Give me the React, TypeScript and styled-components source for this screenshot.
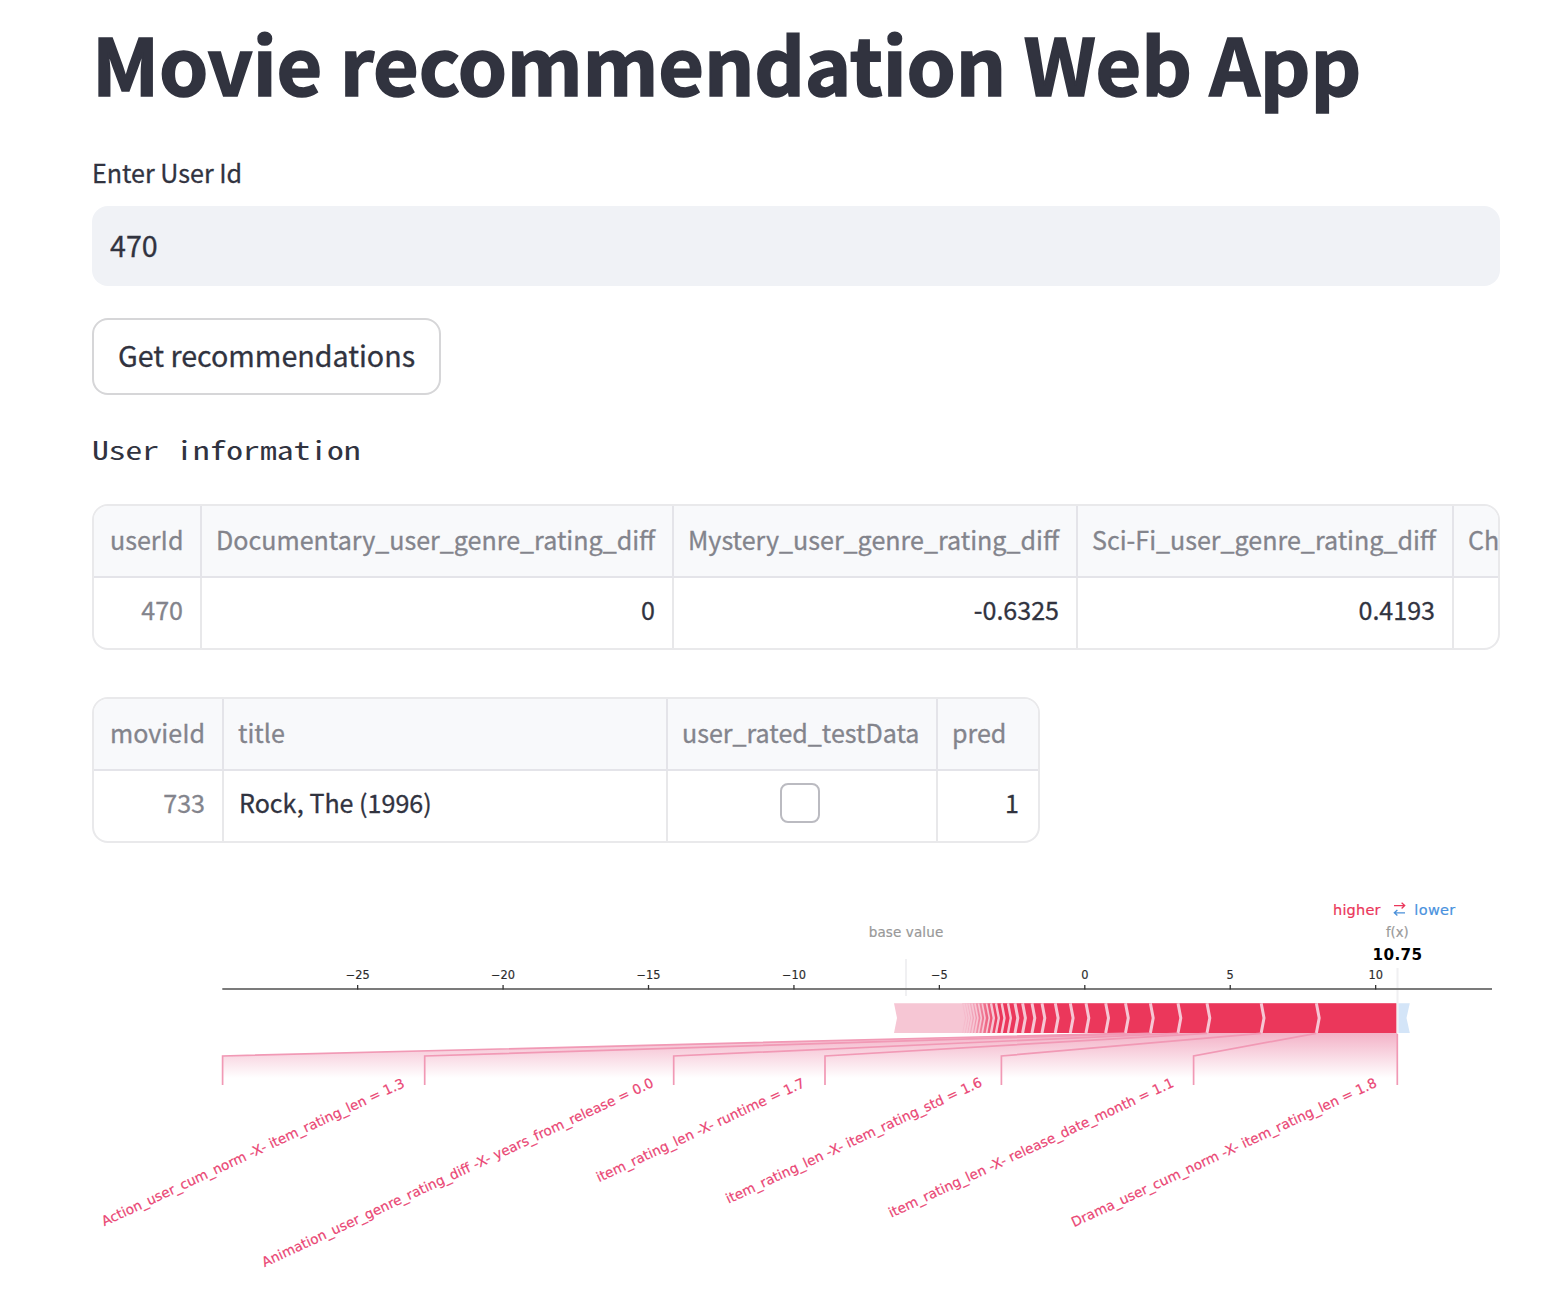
import React from "react";
import styled, { createGlobalStyle } from "styled-components";

const GlobalStyle = createGlobalStyle`
  * { box-sizing: border-box; }
  body { margin: 0; background: #ffffff; }
`;

const sans = `"Noto Sans CJK JP", "Noto Sans", sans-serif`;

const Page = styled.main`
  display: flex;
  flex-direction: column;
  align-items: flex-start;
  width: 1566px;
  height: 1290px;
  padding: 0 66px 0 92px;
  overflow: hidden;
  color: #31333f;
  font-family: ${sans};
  -webkit-text-stroke: 0.3px;
`;

const Title = styled.h1`
  margin: 9px 0 0;
  height: 106px;
  line-height: 106px;
  font-size: 78.8px;
  font-weight: 700;
  letter-spacing: -0.18px;
  white-space: nowrap;
  -webkit-text-stroke: 1.6px #31333f;
`;

const Label = styled.label`
  margin-top: 37px;
  height: 40px;
  line-height: 40px;
  font-size: 25.07px;
`;

const Input = styled.input`
  margin: 14px 0 0;
  width: 100%;
  height: 80px;
  padding: 0 18px 3px;
  border: 0;
  border-radius: 16px;
  outline: 0;
  background: #f0f2f6;
  color: #31333f;
  font-family: ${sans};
  font-size: 28.65px;
  -webkit-text-stroke: 0.3px;
`;

const Button = styled.button`
  margin: 32px 0 0;
  width: 349px;
  height: 77px;
  padding: 0 0 5px;
  border: 2px solid #d6d6d8;
  border-radius: 16px;
  background: #ffffff;
  color: #31333f;
  font-family: ${sans};
  font-size: 28.65px;
  white-space: nowrap;
  -webkit-text-stroke: 0.3px;
`;

const Caption = styled.p`
  margin: 34px 0 0;
  height: 40px;
  line-height: 40px;
  font-family: "Noto Sans Mono CJK JP", "DejaVu Sans Mono", monospace;
  font-size: 25.2px;
  white-space: pre;
  transform: scaleX(1.3333);
  transform-origin: left center;
  -webkit-text-stroke: 0;
`;

const Frame = styled.section<{ $columns: string; $width: string; $top: number }>`
  display: grid;
  flex: none;
  grid-template-columns: ${(p) => p.$columns};
  grid-template-rows: 72px 70px;
  width: ${(p) => p.$width};
  height: 146px;
  margin-top: ${(p) => p.$top}px;
  border: 2px solid #e9e9eb;
  border-radius: 16px;
  overflow: hidden;
`;

const Cell = styled.div<{
  $align?: string;
  $muted?: boolean;
  $left?: number;
  $right?: number;
  $bottom?: number;
}>`
  display: flex;
  align-items: center;
  justify-content: ${(p) => p.$align ?? "flex-end"};
  min-width: 0;
  overflow: hidden;
  padding: 0 ${(p) => p.$right ?? 17}px ${(p) => p.$bottom ?? 8}px ${(p) => p.$left ?? 14}px;
  border-right: 2px solid #e8e8ea;
  color: ${(p) => (p.$muted ? "#83848c" : "#31333f")};
  font-size: 25.07px;
  white-space: nowrap;
  &:last-child { border-right: 0; }
`;

const HeadCell = styled(Cell)<{ $last?: boolean }>`
  justify-content: flex-start;
  padding: 0 0 5px ${(p) => p.$left ?? 14}px;
  border-bottom: 2px solid #e4e4e9;
  border-right: ${(p) => (p.$last ? "0" : "2px solid #e4e4e9")};
  background: #f8f9fb;
  color: #83848c;
`;

const Checkbox = styled.span`
  width: 40px;
  height: 40px;
  border: 2px solid #bbbbc1;
  border-radius: 8px;
  background: #ffffff;
`;

const Plot = styled.svg`
  display: block;
  flex: none;
  margin-top: 17px;
  width: 1408px;
  height: 430px;
  font-family: "DejaVu Sans", sans-serif;
  -webkit-text-stroke: 0;
`;

const FeatureLabel = styled.text`
  font-size: 13.5px;
  fill: #ea4674;
  stroke: #ea4674;
  stroke-width: 0.2px;
`;

const RED = "#eb375b";
const PALE = "#f6c6d4";

const ticks = [-25, -20, -15, -10, -5, 0, 5, 10];

const boundaries = [
  964, 966.5, 969, 972, 975, 978.5, 982.2, 986.5, 991, 996, 1001.7, 1008, 1015,
  1022.6, 1032, 1042, 1055.3, 1070.3, 1086, 1105.7, 1125.5, 1150.4, 1178, 1207, 1261.2, 1316.4,
];

const labels = [
  { x: 222.6, from: 1125, start: [104.3, 1226.3], length: 332, text: "Action_user_cum_norm -X- item_rating_len = 1.3" },
  { x: 424.7, from: 1150, start: [264.5, 1267.3], length: 430, text: "Animation_user_genre_rating_diff -X- years_from_release = 0.0" },
  { x: 673.7, from: 1178, start: [599, 1182.3], length: 228, text: "item_rating_len -X- runtime = 1.7" },
  { x: 825, from: 1207, start: [728.6, 1203.8], length: 280.5, text: "item_rating_len -X- item_rating_std = 1.6" },
  { x: 1001.4, from: 1261, start: [891.3, 1217.8], length: 312.5, text: "item_rating_len -X- release_date_month = 1.1" },
  { x: 1193.6, from: 1316, start: [1074, 1227.3], length: 335, text: "Drama_user_cum_norm -X- item_rating_len = 1.8" },
];

function ForcePlot() {
  return (
    <Plot viewBox="92 860 1408 430">
      <defs>
        <linearGradient id="fade" gradientUnits="userSpaceOnUse" x1="0" y1="1033" x2="0" y2="1078">
          <stop offset="0" stopColor="#f3b2c7" />
          <stop offset="0.5" stopColor="#f9d8e3" />
          <stop offset="1" stopColor="#ffffff" />
        </linearGradient>
        <linearGradient id="strength" gradientUnits="userSpaceOnUse" x1="960" y1="0" x2="998" y2="0">
          <stop offset="0" stopColor={PALE} />
          <stop offset="0.3" stopColor="#f3a9be" />
          <stop offset="1" stopColor={RED} />
        </linearGradient>
      </defs>

      <text x="1333" y="915" fontSize="14.5" fill={RED} stroke={RED} strokeWidth="0.2" textLength="47.5">higher</text>
      <g fill="none" strokeWidth="1.3">
        <path d="M1394 905.6H1404.5M1401.6 902.8L1404.7 905.6L1401.6 908.4" stroke={RED} />
        <path d="M1405 912.8H1394.5M1397.4 910L1394.3 912.8L1397.4 915.6" stroke="#4a90d9" />
      </g>
      <text x="1414.3" y="915" fontSize="14.5" fill="#4a92de" stroke="#4a92de" strokeWidth="0.2" textLength="41">lower</text>
      <text x="1397.3" y="936.6" fontSize="13.2" fill="#999999" stroke="#999999" strokeWidth="0.2" textAnchor="middle">f(x)</text>
      <text x="906" y="936.8" fontSize="13.5" fill="#999999" stroke="#999999" strokeWidth="0.2" textAnchor="middle" textLength="74.5">base value</text>
      <text x="1397.3" y="960" fontSize="15.2" fontWeight="700" fill="#000000" textAnchor="middle" textLength="49.5">10.75</text>

      <path d="M906 959V996M1397.5 968V1033" stroke="#f0f0f2" strokeWidth="2" />
      <path d="M222.3 989H1492" stroke="#7b7b7b" strokeWidth="2" />
      {ticks.map((t) => {
        const x = 1084.8 + t * 29.086;
        return (
          <g key={t}>
            <path d={`M${x} 985V989.5`} stroke="#333333" strokeWidth="1.3" />
            <text x={x} y="979.2" fontSize="11.4" fill="#2b2b2b" stroke="#2b2b2b" strokeWidth="0.15" textAnchor="middle">
              {t < 0 ? `−${-t}` : t}
            </text>
          </g>
        );
      })}

      <path d="M894 1003.3H1396.3V1033H894L897 1018Z" fill={PALE} />
      <path d="M962 1003.3H1396.3V1033H962L965 1018Z" fill="url(#strength)" />
      {boundaries.map((x) => (
        <path
          key={x}
          d={`M${x} 1003.3L${x + 2.8} 1018L${x} 1033`}
          fill="none"
          stroke={PALE}
          strokeWidth={x > 1010 ? 3 : x > 990 ? 2.4 : 1.7}
        />
      ))}
      <path d="M1398.5 1003.3H1409.8L1406.5 1018L1409.8 1033H1398.5Z" fill="#d4e5f8" />

      <path d="M222.6 1085V1056L1125 1033H1397.3V1085Z" fill="url(#fade)" />
      {labels.map((l) => (
        <g key={l.x}>
          <path d={`M${l.x} 1085V1056L${l.from} 1033.3`} fill="none" stroke="#f199b5" strokeWidth="1.7" />
          <FeatureLabel
            textLength={l.length}
            transform={`translate(${l.start[0]} ${l.start[1]}) rotate(-24.9)`}
          >
            {l.text}
          </FeatureLabel>
        </g>
      ))}
      <path d="M1397.3 1034V1085" stroke="#f199b5" strokeWidth="1.7" />
    </Plot>
  );
}

export default function App() {
  return (
    <>
      <GlobalStyle />
      <Page>
        <Title>Movie recommendation Web App</Title>
        <Label htmlFor="user-id">Enter User Id</Label>
        <Input id="user-id" defaultValue="470" />
        <Button type="button">Get recommendations</Button>
        <Caption>User information</Caption>

        <Frame $columns="108px 472px 404px 376px 44px" $width="1408px" $top={35}>
          <HeadCell $left={16}>userId</HeadCell>
          <HeadCell>Documentary_user_genre_rating_diff</HeadCell>
          <HeadCell>Mystery_user_genre_rating_diff</HeadCell>
          <HeadCell>Sci-Fi_user_genre_rating_diff</HeadCell>
          <HeadCell $last>Ch</HeadCell>
          <Cell $muted>470</Cell>
          <Cell>0</Cell>
          <Cell>-0.6325</Cell>
          <Cell>0.4193</Cell>
          <Cell />
        </Frame>

        <Frame $columns="130px 444px 270px 100px" $width="948px" $top={47}>
          <HeadCell $left={16}>movieId</HeadCell>
          <HeadCell>title</HeadCell>
          <HeadCell>user_rated_testData</HeadCell>
          <HeadCell $last>pred</HeadCell>
          <Cell $muted>733</Cell>
          <Cell $align="flex-start" $left={15}>Rock, The (1996)</Cell>
          <Cell $align="center" $left={13} $bottom={6}><Checkbox /></Cell>
          <Cell $right={19}>1</Cell>
        </Frame>

        <ForcePlot />
      </Page>
    </>
  );
}
